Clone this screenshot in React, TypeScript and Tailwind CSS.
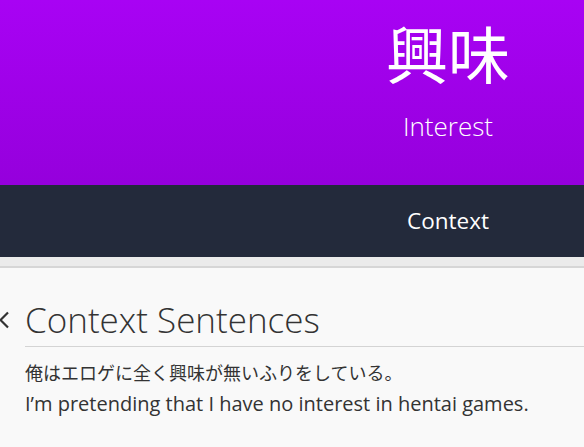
export default function App() {
  return (
    <div className="w-[584px] h-[447px] overflow-hidden bg-[#f9f9f9] font-['Open_Sans','Noto_Sans_CJK_JP',sans-serif]">
      <header className="w-[896px] h-[185px] bg-gradient-to-b from-[#a802f4] to-[#9500dc] text-white text-center">
        <div className="pt-[12px] text-[62px] leading-[80px] font-['Noto_Sans_CJK_JP',sans-serif]">興味</div>
        <div className="mt-[17px] text-[26px] font-light leading-[34px]">Interest</div>
      </header>
      <nav className="w-[896px] h-[72px] bg-[#232a3b] flex items-center justify-center">
        <span className="text-white text-[22.5px]">Context</span>
      </nav>
      <div className="h-[11px] bg-[#ebebeb] border-b-2 border-[#d6d6d6]" />
      <section className="relative pl-[25px] pt-[30px]">
        <svg className="absolute left-[-2px] top-[43px]" width="12" height="18" viewBox="0 0 12 18" fill="none">
          <path d="M10 1.5 L2.5 9 L10 16.5" stroke="#333" strokeWidth="2.2" />
        </svg>
        <h2 className="text-[35px] font-light text-[#333] leading-[44px] pb-[4px] border-b border-[#d4d4d4]">Context Sentences</h2>
        <p className="mt-[11px] text-[18px] leading-[28px] text-[#333] font-['Noto_Sans_CJK_JP',sans-serif]">俺はエロゲに全く興味が無いふりをしている。</p>
        <p className="mt-[3px] text-[20px] leading-[30px] text-[#333]">I’m pretending that I have no interest in hentai games.</p>
      </section>
    </div>
  )
}
